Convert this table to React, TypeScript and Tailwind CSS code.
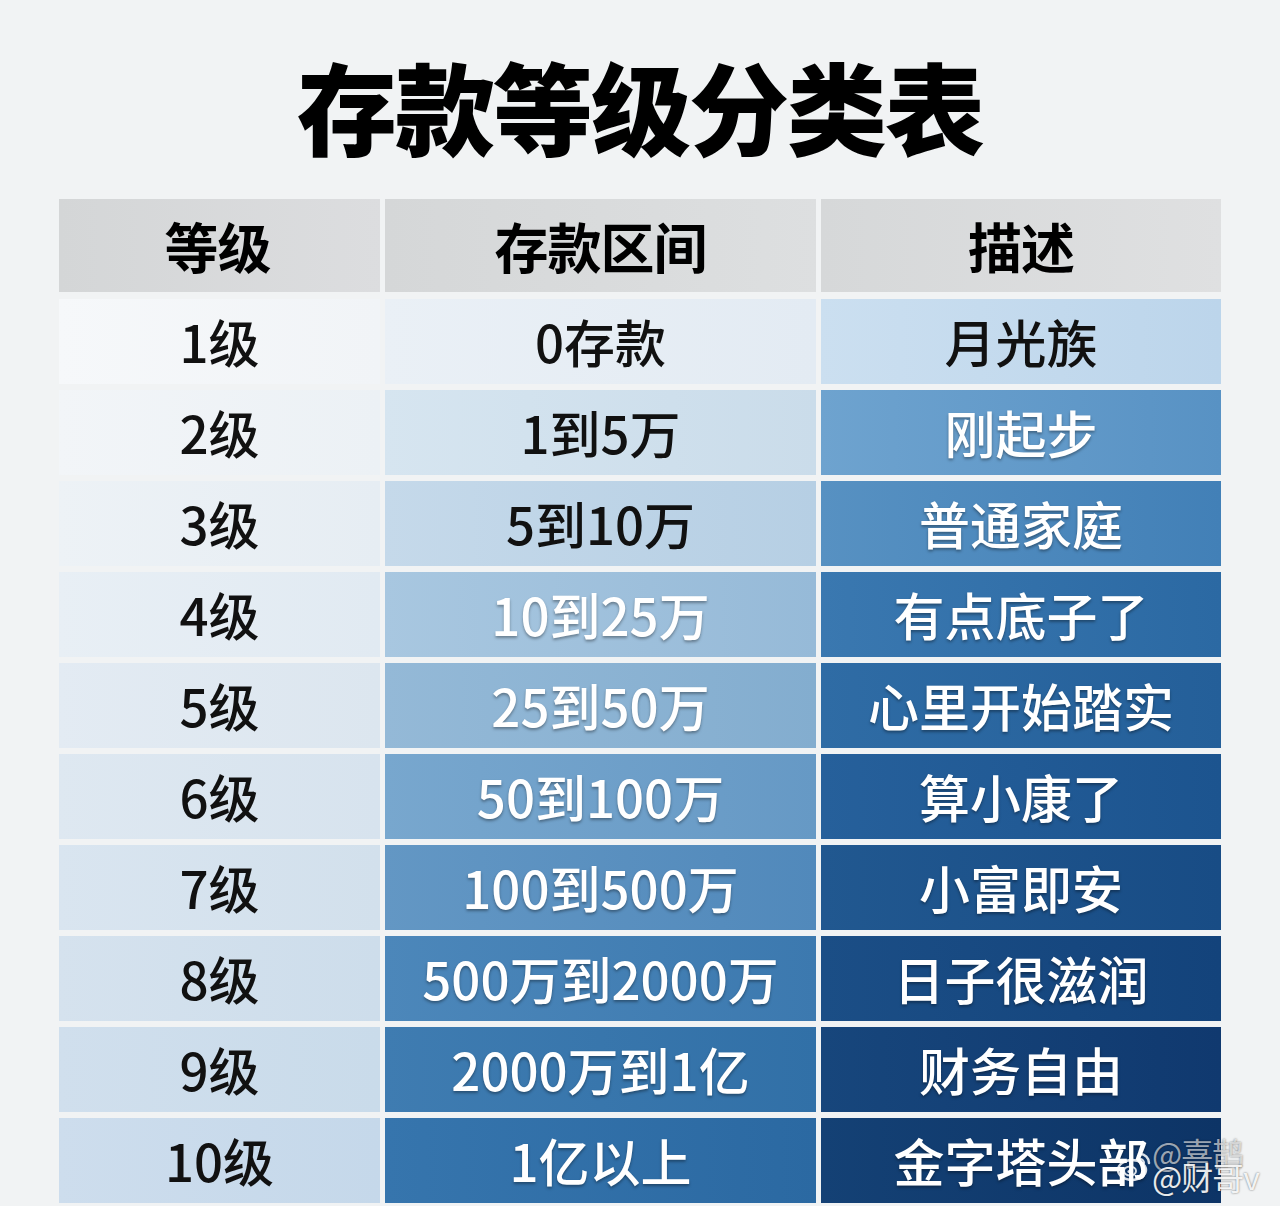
const rows = [
  {
    level: "1级",
    range: "0存款",
    desc: "月光族",
    c1: "bg-gradient-to-r from-[#f6f8fa] to-[#f1f4f7]",
    c2: "bg-gradient-to-r from-[#eaf0f6] to-[#e3ebf3]",
    c3: "bg-gradient-to-r from-[#cbdff0] to-[#bcd5eb]",
    t2: "text-[#111]",
    t3: "text-[#111]",
  },
  {
    level: "2级",
    range: "1到5万",
    desc: "刚起步",
    c1: "bg-gradient-to-r from-[#f2f5f8] to-[#ecf1f5]",
    c2: "bg-gradient-to-r from-[#d6e5f0] to-[#cadcea]",
    c3: "bg-gradient-to-r from-[#6ea3cf] to-[#5892c4]",
    t2: "text-[#111]",
    t3: "text-white",
  },
  {
    level: "3级",
    range: "5到10万",
    desc: "普通家庭",
    c1: "bg-gradient-to-r from-[#edf2f6] to-[#e6edf3]",
    c2: "bg-gradient-to-r from-[#c5d9ea] to-[#b6cfe4]",
    c3: "bg-gradient-to-r from-[#5791c2] to-[#4280b7]",
    t2: "text-[#111]",
    t3: "text-white",
  },
  {
    level: "4级",
    range: "10到25万",
    desc: "有点底子了",
    c1: "bg-gradient-to-r from-[#e8eff5] to-[#e1eaf2]",
    c2: "bg-gradient-to-r from-[#a8c7e0] to-[#96bad8]",
    c3: "bg-gradient-to-r from-[#3a78b0] to-[#2b69a3]",
    t2: "text-white",
    t3: "text-white",
  },
  {
    level: "5级",
    range: "25到50万",
    desc: "心里开始踏实",
    c1: "bg-gradient-to-r from-[#e3ebf3] to-[#dce6ef]",
    c2: "bg-gradient-to-r from-[#94b9d7] to-[#83adcf]",
    c3: "bg-gradient-to-r from-[#2f6ca5] to-[#245f99]",
    t2: "text-white",
    t3: "text-white",
  },
  {
    level: "6级",
    range: "50到100万",
    desc: "算小康了",
    c1: "bg-gradient-to-r from-[#dee8f1] to-[#d7e3ee]",
    c2: "bg-gradient-to-r from-[#78a7ce] to-[#6699c5]",
    c3: "bg-gradient-to-r from-[#26609b] to-[#1c548f]",
    t2: "text-white",
    t3: "text-white",
  },
  {
    level: "7级",
    range: "100到500万",
    desc: "小富即安",
    c1: "bg-gradient-to-r from-[#d9e5f0] to-[#d2e0ec]",
    c2: "bg-gradient-to-r from-[#6397c4] to-[#5189bb]",
    c3: "bg-gradient-to-r from-[#215890] to-[#184c85]",
    t2: "text-white",
    t3: "text-white",
  },
  {
    level: "8级",
    range: "500万到2000万",
    desc: "日子很滋润",
    c1: "bg-gradient-to-r from-[#d5e2ee] to-[#cdddeb]",
    c2: "bg-gradient-to-r from-[#4c87ba] to-[#3c79af]",
    c3: "bg-gradient-to-r from-[#1b4e86] to-[#13437b]",
    t2: "text-white",
    t3: "text-white",
  },
  {
    level: "9级",
    range: "2000万到1亿",
    desc: "财务自由",
    c1: "bg-gradient-to-r from-[#d0dfed] to-[#c9dbea]",
    c2: "bg-gradient-to-r from-[#3f7cb1] to-[#3170a7]",
    c3: "bg-gradient-to-r from-[#17467c] to-[#10396f]",
    t2: "text-white",
    t3: "text-white",
  },
  {
    level: "10级",
    range: "1亿以上",
    desc: "金字塔头部",
    c1: "bg-gradient-to-r from-[#cddded] to-[#c5d8ea]",
    c2: "bg-gradient-to-r from-[#3675ad] to-[#2b69a2]",
    c3: "bg-gradient-to-r from-[#144175] to-[#0d3466]",
    t2: "text-white",
    t3: "text-white",
  },
];

const cellText = "text-[51px] font-medium leading-none";
const whiteShadow = "[text-shadow:0_2px_3px_rgba(0,0,0,0.35)]";

function WeiboMark() {
  return (
    <svg width="36" height="32" viewBox="0 0 36 32" fill="none">
      <ellipse cx="16" cy="20" rx="14" ry="10" stroke="white" strokeWidth="2.5" opacity="0.85" />
      <ellipse cx="14" cy="21" rx="6" ry="4.5" stroke="white" strokeWidth="2" opacity="0.85" />
      <circle cx="13" cy="21.5" r="1.6" fill="white" opacity="0.85" />
      <path d="M24 4c5 0 9 4 9 9" stroke="white" strokeWidth="2.5" strokeLinecap="round" opacity="0.85" />
      <path d="M24 9c2.2 0 4 1.8 4 4" stroke="white" strokeWidth="2.2" strokeLinecap="round" opacity="0.85" />
    </svg>
  );
}

export default function App() {
  return (
    <div
      className="relative h-[1206px] w-[1280px] overflow-hidden bg-[#f1f3f4]"
      style={{ fontFamily: '"Noto Sans CJK SC", "Noto Sans", sans-serif' }}
    >
      <div className="flex h-[199px] items-center justify-center pt-[10px]">
        <h1 className="text-[100px] font-black leading-none tracking-[-2px] text-black">存款等级分类表</h1>
      </div>

      <div className="ml-[59px] grid w-[1162px] grid-cols-[321px_431px_400px] gap-x-[5px]">
        <div className="flex h-[93px] items-center justify-center bg-gradient-to-r from-[#d4d6d7] to-[#dcdddf] pr-[4px]">
          <span className="text-[54px] font-bold leading-none tracking-[-1px] text-black">等级</span>
        </div>
        <div className="flex h-[93px] items-center justify-center bg-gradient-to-r from-[#d5d7d8] to-[#dddfe0]">
          <span className="text-[54px] font-bold leading-none tracking-[-1px] text-black">存款区间</span>
        </div>
        <div className="flex h-[93px] items-center justify-center bg-gradient-to-r from-[#d6d8d9] to-[#dfe0e1]">
          <span className="text-[54px] font-bold leading-none tracking-[-1px] text-black">描述</span>
        </div>
      </div>

      <div className="ml-[59px] mt-[7px] flex w-[1162px] flex-col gap-y-[6px]">
        {rows.map((r) => (
          <div key={r.level} className="grid h-[85px] grid-cols-[321px_431px_400px] gap-x-[5px]">
            <div className={`flex items-center justify-center ${r.c1}`}>
              <span className={`${cellText} text-[#111]`}>{r.level}</span>
            </div>
            <div className={`flex items-center justify-center ${r.c2}`}>
              <span className={`${cellText} ${r.t2} ${r.t2 === "text-white" ? whiteShadow : ""}`}>{r.range}</span>
            </div>
            <div className={`flex items-center justify-center ${r.c3}`}>
              <span className={`${cellText} ${r.t3} ${r.t3 === "text-white" ? whiteShadow : ""}`}>{r.desc}</span>
            </div>
          </div>
        ))}
      </div>

      {/* weibo watermark */}
      <div className="absolute left-[1116px] top-[1150px]">
        <WeiboMark />
      </div>
      <div className="absolute left-[1152px] top-[1136px] text-[32px] leading-none tracking-[-1px] text-white/60 [text-shadow:0_0_2px_rgba(0,0,0,0.5)]">
        @喜鹊
      </div>
      <div className="absolute left-[1152px] top-[1160px] text-[32px] leading-none tracking-[-1px] text-white/90 [text-shadow:0_0_2px_rgba(0,0,0,0.6)]">
        @财哥v
      </div>
    </div>
  );
}
